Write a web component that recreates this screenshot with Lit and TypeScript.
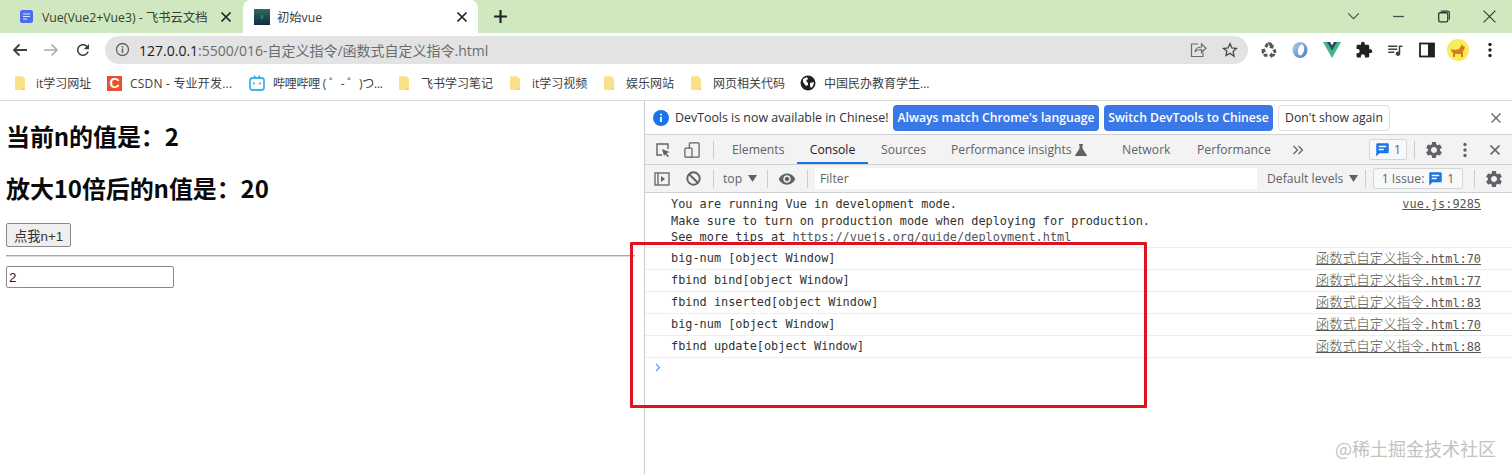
import { LitElement, html, css } from "lit";
import { customElement } from "lit/decorators.js";

const X = (c: string, w = 1.6) => html`<svg class="i12" viewBox="0 0 12 12"><path d="M1.5 1.5l9 9M10.5 1.5l-9 9" stroke=${c} stroke-width=${w} fill="none"/></svg>`;
const folder = html`<svg class="fold" viewBox="0 0 12 16"><path d="M1 0h7l3 3v11l-1 1H1l-1-1V1z" fill="#fbe08a"/><path d="M8 14h3" stroke="#e2c25c"/></svg>`;
const GEAR = "M19.14 12.94c.04-.3.06-.61.06-.94 0-.32-.02-.64-.07-.94l2.03-1.58c.18-.14.23-.41.12-.61l-1.92-3.32c-.12-.22-.37-.29-.59-.22l-2.39.96c-.5-.38-1.03-.7-1.62-.94l-.36-2.54c-.04-.24-.24-.41-.48-.41h-3.84c-.24 0-.43.17-.47.41l-.36 2.54c-.59.24-1.13.57-1.62.94l-2.39-.96c-.22-.08-.47 0-.59.22L2.74 8.87c-.12.21-.08.47.12.61l2.03 1.58c-.05.3-.09.63-.09.94s.02.64.07.94l-2.03 1.58c-.18.14-.23.41-.12.61l1.92 3.32c.12.22.37.29.59.22l2.39-.96c.5.38 1.03.7 1.62.94l.36 2.54c.05.24.24.41.48.41h3.84c.24 0 .44-.17.47-.41l.36-2.54c.59-.24 1.13-.56 1.62-.94l2.39.96c.22.08.47 0 .59-.22l1.92-3.32c.12-.22.07-.47-.12-.61l-2.01-1.58zM12 15.6c-1.98 0-3.6-1.62-3.6-3.6s1.62-3.6 3.6-3.6 3.6 1.62 3.6 3.6-1.62 3.6-3.6 3.6z";
const gear = html`<svg class="i20" viewBox="0 0 24 24"><path d=${GEAR} fill="#5f6368"/></svg>`;
const chat = html`<svg class="i14" viewBox="0 0 24 24"><path d="M20 2H4c-1.1 0-2 .9-2 2v19l5-5h13c1.1 0 2-.9 2-2V4c0-1.1-.9-2-2-2z" fill="#1a73e8"/><path d="M6 7h12M6 12h8" stroke="#fff" stroke-width="2.4"/></svg>`;
const dots = (c: string) => html`<svg class="i4" viewBox="0 0 4 16"><circle cx="2" cy="2.5" r="1.7" fill=${c}/><circle cx="2" cy="8" r="1.7" fill=${c}/><circle cx="2" cy="13.5" r="1.7" fill=${c}/></svg>`;
const tri = html`<svg class="tri" viewBox="0 0 9 7"><path d="M0 0h9L4.5 7z" fill="#5f6368"/></svg>`;

const logs = [
  ["big-num [object Window]", "70"],
  ["fbind bind[object Window]", "77"],
  ["fbind inserted[object Window]", "83"],
  ["big-num [object Window]", "70"],
  ["fbind update[object Window]", "88"],
];
const marks = [
  [folder, "it学习网址"],
  [html`<div class="csdn">C</div>`, "CSDN - 专业开发..."],
  [html`<svg class="i16" viewBox="0 0 16 16"><path d="M5 0.5l2 2.5M11 0.5l-2 2.5" stroke="#3db4e6" stroke-width="1.4"/><rect x="1" y="3" width="14" height="12" rx="2.5" fill="none" stroke="#3db4e6" stroke-width="1.8"/><path d="M5 7.5v2M11 7.5v2" stroke="#3db4e6" stroke-width="1.8"/></svg>`, "哔哩哔哩 ( ゜- ゜)つ..."],
  [folder, "飞书学习笔记"],
  [folder, "it学习视频"],
  [folder, "娱乐网站"],
  [folder, "网页相关代码"],
  [html`<svg class="i16" viewBox="0 0 16 16"><circle cx="8" cy="8" r="7.5" fill="#202124"/><path d="M3 4l4-2 1 2-2 2 2 2v2l-2 1-3-4zM10 8l4-1-1 4-2 2-1-2z" fill="#fff"/></svg>`, "中国民办教育学生..."],
];

@customElement("app-root")
export class AppRoot extends LitElement {
  static styles = css`
    :host { display: block; position: relative; width: 1512px; height: 474px; overflow: hidden; background: #fff; font-family: "Open Sans", "Noto Sans CJK SC", sans-serif; color: #3c4043; }
    svg { display: block; flex: none; }
    .i12 { width: 12px; height: 12px; } .i14 { width: 15px; height: 15px; } .i16 { width: 16px; height: 16px; } .i18 { width: 18px; height: 18px; } .i20 { width: 20px; height: 20px; }
    .i4 { width: 4px; height: 16px; } .tri { width: 9px; height: 7px; }
    .tabs { height: 33px; background: #cfe8bf; display: grid; grid-template-columns: 243px 235px 44px 1fr; align-items: center; font-size: 12.3px; }
    .tab { height: 33px; display: flex; align-items: center; box-sizing: border-box; }
    .t1 { padding-left: 20px; color: #35412f; }
    .t1 .fav { width: 13px; height: 13px; margin-right: 9px; }
    .t1 span { width: 178px; white-space: nowrap; }
    .t2 { background: #fff; border-radius: 8px 8px 0 0; padding-left: 11px; color: #3c4043; }
    .t2 .fav { width: 16px; height: 16px; margin-right: 7px; }
    .t2 span { width: 179px; }
    .plus { justify-self: center; }
    .winbtns { display: grid; grid-template-columns: 45px 44px 46px 46px; justify-content: end; justify-items: center; }
    .toolbar { height: 33px; display: flex; align-items: center; background: #fff; padding-left: 10.5px; }
    .nav { width: 31.5px; display: flex; }
    .nav svg { width: 18px; height: 18px; }
    .omni { width: 1143px; height: 28px; border-radius: 14px; background: #e3e3e3; display: flex; align-items: center; padding: 0 10px; box-sizing: border-box; font-size: 14px; color: #6a6d70; }
    .omni b { font-weight: 400; color: #202124; }
    .omni .url { margin-left: 9px; flex: 1; white-space: nowrap; }
    .omni .share { margin-right: 15px; }
    .exts { display: grid; grid-template-columns: repeat(8, 31.6px); margin-left: 5px; justify-items: center; align-items: center; }
    .avatar { width: 22px; height: 22px; }
    .marks { height: 35px; box-sizing: border-box; border-bottom: 1px solid #d8d8d8; padding-left: 15px; display: grid; grid-template-columns: 92px 142px 150px 111px 94px 87px 109px 1fr; align-items: center; font-size: 12px; color: #3c4043; }
    .mark { display: flex; align-items: center; white-space: nowrap; }
    .mark .slot { width: 22px; flex: none; }
    .mark:nth-child(1) .slot { width: 21px; }
    .mark:nth-child(2) .slot { width: 23px; }
    .mark:nth-child(2) span { letter-spacing: 0.2px; }
    .mark:nth-child(3) .slot, .mark:nth-child(8) .slot { width: 24px; }
    .mark:nth-child(3) span { letter-spacing: -0.25px; }
    .csdn { width: 15px; height: 15px; background: #e8502f; color: #fff; font: 700 14px/15px "Liberation Sans", sans-serif; text-align: center; }
    .fold { width: 11px; height: 15px; }
    .split { display: flex; height: 373px; }
    .page { flex: none; box-sizing: border-box; border-right: 1px solid #ccc; padding-left: 6px; padding-top: 19px; color: #000; width: 645px; font-family: "Liberation Sans", "Noto Sans CJK SC", sans-serif; }
    h3 { margin: 0 0 19px; font: 700 24px/32px "Noto Sans CJK SC", sans-serif; color: #0a0a0a; letter-spacing: -0.1px; }
    h3 + h3 { margin-top: 20px; }
    button.n { display: block; margin: 0 0 8px; width: 65px; height: 24px; padding: 0; box-sizing: border-box; background: #efefef; border: 1px solid #8a8a8a; border-radius: 2px; font-size: 13.3px; font-family: "Liberation Sans", "Noto Sans CJK SC", sans-serif; color: #333; }
    hr { margin: 0 9px 0 0; height: 0; border: 0; border-top: 1px solid #a8a8a8; border-bottom: 1px solid #dcdcdc; }
    input { display: block; margin-top: 9px; width: 168px; height: 22px; box-sizing: border-box; border: 1px solid #8a8a8a; border-radius: 2px; padding: 1px 2px; font: 13.3px "Liberation Sans", sans-serif; color: #222; }
    .dev { flex: 1; min-width: 0; display: flex; flex-direction: column; font-size: 12.2px; color: #5f6368; }
    .info { height: 34px; box-sizing: border-box; border-bottom: 1px solid #cfd1d3; display: flex; align-items: center; padding-left: 8px; background: #fff; color: #303134; font-size: 12.4px; }
    .info .txt { margin-left: 6px; width: 218px; white-space: nowrap; }
    .bbtn { height: 26px; border-radius: 4px; background: #3b78e7; color: #fff; display: flex; align-items: center; justify-content: center; font-weight: 600; font-size: 12.2px; margin-right: 5px; white-space: nowrap; }
    .b1 { width: 206px; } .b2 { width: 169px; }
    .b3 { width: 112px; box-sizing: border-box; background: #fff; color: #303134; border: 1px solid #e0e0e0; font-weight: 400; margin-right: 100px; }
    .devtabs { height: 30px; box-sizing: border-box; background: #f3f3f3; border-bottom: 1px solid #cfd1d3; display: flex; align-items: center; padding-left: 10px; }
    .sep { width: 1px; height: 18px; background: #ccc; flex: none; }
    .dev2 { margin-left: 13px; } .s1 { margin-left: 13px; }
    .dt { height: 29px; display: flex; align-items: center; box-sizing: border-box; white-space: nowrap; flex: none; }
    .d1 { margin-left: 18px; width: 65px; }
    .dt.on { color: #202124; border-bottom: 2px solid #1a73e8; justify-content: center; padding-top: 2px; width: 71px; }
    .d2 { margin-left: 13px; width: 70px; } .d3 { width: 124px; }
    .d4 { margin-left: 35px; width: 75px; } .d5 { width: 95px; }
    .badge { height: 21px; border: 1px solid #d4d6d8; border-radius: 2px; display: flex; align-items: center; justify-content: center; gap: 4px; box-sizing: border-box; background: #f7f8f9; flex: none; }
    .b-a { margin-left: 65px; width: 38px; }
    .s2 { margin-left: 7px; }
    .g1 { margin-left: 9px; } .d3dots { margin-left: 19px; } .x1 { margin-left: 22px; }
    .filter { height: 28px; box-sizing: border-box; background: #f3f3f3; border-bottom: 1px solid #cfd1d3; display: flex; align-items: center; padding-left: 9px; }
    .ban { margin-left: 16px; } .s3 { margin-left: 12px; }
    .top { margin-left: 9px; width: 20px; } .topt { margin-left: 5px; }
    .s4 { margin-left: 10px; } .eye { margin-left: 10px; } .s5 { margin-left: 11px; }
    .fbox { width: 442px; height: 21px; background: #fff; box-sizing: border-box; padding-left: 5px; line-height: 21px; margin: 0 10px 0 7px; flex: none; }
    .lv { width: 77px; white-space: nowrap; flex: none; } .lvt { margin-left: 5px; }
    .s6 { margin-left: 7px; }
    .b-b { margin-left: 7px; width: 90px; }
    .s7 { margin-left: 11px; } .g2 { margin-left: 9px; }
    .log { font: 11.88px/16.5px "DejaVu Sans Mono", "Noto Sans CJK SC", monospace; color: #333; }
    .first { height: 55px; box-sizing: border-box; padding: 3px 31px 0 26px; border-bottom: 1px solid #eee; display: flex; justify-content: space-between; white-space: pre; }
    .first a, .row a { color: #555; text-decoration: underline; }
    .first .u { color: #555; text-decoration: underline; }
    .row { height: 22px; box-sizing: border-box; padding: 0 31px 0 26px; border-bottom: 1px solid #eee; display: flex; justify-content: space-between; align-items: center; white-space: pre; }
    .cjk { font-size: 13.5px; font-family: "Noto Sans CJK SC", sans-serif; font-weight: 300; }
    .prompt { padding: 5px 0 0 10px; }
    .red { position: absolute; left: 630px; top: 242px; width: 517px; height: 166px; box-sizing: border-box; border: 3px solid #e0121e; pointer-events: none; border-radius: 1px; }
    .mark-w { position: absolute; right: 16px; top: 435px; font: 400 18px/26px "Noto Sans CJK SC", sans-serif; color: #c2c2c2; white-space: nowrap; }
  `;

  render() {
    return html`
      <div class="tabs">
        <div class="tab t1">
          <svg class="fav" viewBox="0 0 13 13"><rect width="13" height="13" rx="2.5" fill="#4a6cf0"/><path d="M3 4h7M3 6.5h7M3 9h4" stroke="#dfe6ff" stroke-width="1.1"/></svg>
          <span>Vue(Vue2+Vue3) - 飞书云文档</span>${X("#222", 1.7)}
        </div>
        <div class="tab t2">
          <svg class="fav" viewBox="0 0 16 16"><defs><linearGradient id="g" x1="0" y1="0" x2="0" y2="1"><stop offset="0" stop-color="#2c6a60"/><stop offset="1" stop-color="#142c44"/></linearGradient></defs><rect width="16" height="16" fill="url(#g)"/><rect x="7.5" y="6" width="1" height="4" fill="#5aa88a"/></svg>
          <span>初始vue</span>${X("#222", 1.7)}
        </div>
        <svg class="plus i14" viewBox="0 0 14 14"><path d="M7 1v12M1 7h12" stroke="#222" stroke-width="2"/></svg>
        <div class="winbtns">
          <svg class="i14" viewBox="0 0 14 14"><path d="M2 4l5 5 5-5" stroke="#4a4a4a" fill="none"/></svg>
          <svg class="i14" viewBox="0 0 14 14"><path d="M2 7h10" stroke="#4a4a4a" stroke-width="1.2"/></svg>
          <svg class="i14" viewBox="0 0 14 14"><rect x="2.5" y="3.5" width="8.5" height="8.5" rx="1.5" fill="none" stroke="#333" stroke-width="1.2"/><path d="M4.5 2h6a2 2 0 0 1 2 2v6" fill="none" stroke="#333"/></svg>
          <svg class="i14" viewBox="0 0 14 14"><path d="M1.5 1.5l11 11M12.5 1.5l-11 11" stroke="#333" stroke-width="1"/></svg>
        </div>
      </div>
      <div class="toolbar">
        <div class="nav"><svg viewBox="0 0 18 18"><path d="M16 9H3M8.5 3.5L3 9l5.5 5.5" fill="none" stroke="#3c4043" stroke-width="1.8"/></svg></div>
        <div class="nav"><svg viewBox="0 0 18 18"><path d="M2 9h13M9.5 3.5L15 9l-5.5 5.5" fill="none" stroke="#a9abad" stroke-width="1.6"/></svg></div>
        <div class="nav"><svg viewBox="0 0 24 24"><path d="M17.65 6.35C16.2 4.9 14.21 4 12 4c-4.42 0-7.99 3.58-7.99 8s3.57 8 7.99 8c3.73 0 6.84-2.55 7.73-6h-2.08c-.82 2.33-3.04 4-5.65 4-3.31 0-6-2.69-6-6s2.69-6 6-6c1.66 0 3.14.69 4.22 1.78L13 11h7V4l-2.35 2.35z" fill="#3c4043"/></svg></div>
        <div class="omni">
          <svg class="i14" viewBox="0 0 15 15"><circle cx="7.5" cy="7.5" r="6" fill="none" stroke="#5f6368" stroke-width="1.3"/><path d="M7.5 6.5v4.5M7.5 4v1.5" stroke="#5f6368" stroke-width="1.5"/></svg>
          <div class="url"><b>127.0.0.1</b>:5500/016-自定义指令/函数式自定义指令.html</div>
          <svg class="share i18" viewBox="0 0 18 18"><path d="M9 3H2.5v12.5h11.5v-4" fill="none" stroke="#6a6d70" stroke-width="1.2"/><path d="M6 11c.5-3.5 3-5 6.5-5V3l4.5 4.3-4.5 4V8.5C9.5 8.5 7.5 9 6 11z" fill="none" stroke="#6a6d70" stroke-width="1.2"/></svg>
          <svg class="i16" viewBox="0 0 24 24"><path d="M12 2.5l2.9 6.4 7 .8-5.2 4.7 1.4 6.9L12 17l-6.1 3.3 1.4-6.9L2.1 9.7l7-.8z" fill="none" stroke="#4a4d50" stroke-width="2"/></svg>
        </div>
        <div class="exts">
          <svg class="i18" viewBox="0 0 24 24"><path d="M5.77 7.15 7.2 4.78l1.03-1.71c.39-.65 1.33-.65 1.72 0l1.48 2.46-1.23 2.06-1 1.62-3.43-2.06zm15.95 5.82-1.6-2.66-3.46 2L18.87 16H20c.76 0 1.45-.43 1.79-1.11.14-.28.21-.58.21-.89 0-.36-.1-.71-.28-1.03zM16 21h1.5c.76 0 1.45-.43 1.79-1.11L20.74 17H16v-2l-4 4 4 4v-2zm-6-4H5.7l-.84 1.41c-.3.5-.32 1.12-.06 1.65.28.57.87.94 1.52.94H10v-4zm-3.88-2.65 1.73 1.04L6.48 9.9 1 11.27l1.7 1.02-.41.69c-.35.59-.38 1.31-.07 1.92l1.63 3.26 2.27-3.81zm10.9-9.21-1.3-2.17C15.11 2.02 14.16 1.5 13.14 1.5h-3.35l3.87 6.44-1.72 1.03 5.48 1.37 1.37-5.48-1.77 1.28z" fill="#55585b"/></svg>
          <svg class="i18" viewBox="0 0 18 18"><defs><linearGradient id="o" x1="0" y1="0" x2="1" y2="1"><stop offset="0" stop-color="#b9cfe8"/><stop offset="1" stop-color="#3f78c4"/></linearGradient></defs><ellipse cx="9" cy="9" rx="7.5" ry="8" fill="url(#o)"/><ellipse cx="10" cy="9" rx="3" ry="5.5" fill="#fff" transform="rotate(12 10 9)"/></svg>
          <svg class="i18" viewBox="0 0 18 16"><path d="M0 0h7l2 3.5L11 0h7L9 16z" fill="#41b883"/><path d="M4 0h3l2 3.5L11 0h3L9 8.5z" fill="#2f4a5c"/></svg>
          <svg class="i18" viewBox="0 0 24 24"><path d="M20.5 11H19V7c0-1.1-.9-2-2-2h-4V3.5C13 2.12 11.88 1 10.5 1S8 2.12 8 3.5V5H4c-1.1 0-1.99.9-1.99 2v3.8H3.5c1.49 0 2.7 1.21 2.7 2.7s-1.21 2.7-2.7 2.7H2V20c0 1.1.9 2 2 2h3.8v-1.5c0-1.49 1.21-2.7 2.7-2.7 1.49 0 2.7 1.21 2.7 2.7V22H17c1.1 0 2-.9 2-2v-4h1.5c1.38 0 2.5-1.12 2.5-2.5S21.88 11 20.5 11z" fill="#202124"/></svg>
          <svg class="i18" viewBox="0 0 24 24"><path d="M15 6H3v2h12V6zm0 4H3v2h12v-2zM3 16h8v-2H3v2zM17 6v8.18c-.31-.11-.65-.18-1-.18-1.66 0-3 1.34-3 3s1.34 3 3 3 3-1.34 3-3V8h3V6h-5z" fill="#3c4043"/></svg>
          <svg class="i16" viewBox="0 0 16 16"><rect x="1" y="1.5" width="14" height="13" fill="none" stroke="#202124" stroke-width="1.8"/><rect x="9" y="1.5" width="6" height="13" fill="#202124"/></svg>
          <svg class="avatar" viewBox="0 0 22 22"><circle cx="11" cy="11" r="11" fill="#f7ec5a"/><path d="M4 10c2 1 6 1 8 0l2-3 1-2 1 2 2 1-1 3-1 1v6h-2v-3H8v3H6v-4c-1-1-2-2-2-4z" fill="#dc7a24"/></svg>
          ${dots("#202124")}
        </div>
      </div>
      <div class="marks">
        ${marks.map(([ic, t]) => html`<div class="mark"><div class="slot">${ic}</div><span>${t}</span></div>`)}
      </div>
      <div class="split">
        <div class="page">
          <h3>当前n的值是：2</h3>
          <h3>放大10倍后的n值是：20</h3>
          <button class="n">点我n+1</button>
          <hr />
          <input value="2" />
        </div>
        <div class="dev">
          <div class="info">
            <svg class="i16" viewBox="0 0 16 16"><circle cx="8" cy="8" r="8" fill="#1a73e8"/><path d="M8 7v5M8 3.8v1.8" stroke="#fff" stroke-width="1.8"/></svg>
            <div class="txt">DevTools is now available in Chinese!</div>
            <div class="bbtn b1">Always match Chrome's language</div>
            <div class="bbtn b2">Switch DevTools to Chinese</div>
            <div class="bbtn b3">Don't show again</div>
            ${X("#5f6368", 1.3)}
          </div>
          <div class="devtabs">
            <svg class="i16" viewBox="0 0 16 16"><path d="M7 13H2V2h11v5" fill="none" stroke="#5f6368" stroke-width="1.4"/><path d="M7 7l7.5 3-3 1.2 2.5 3-1.2 1-2.5-3L9 14z" fill="#5f6368"/></svg>
            <svg class="i16 dev2" viewBox="0 0 18 18"><rect x="6" y="1" width="11" height="16" rx="1" fill="none" stroke="#5f6368" stroke-width="1.4"/><rect x="1" y="7" width="8" height="10" rx="1" fill="#f3f3f3" stroke="#5f6368" stroke-width="1.4"/></svg>
            <div class="sep s1"></div>
            <div class="dt d1">Elements</div>
            <div class="dt on">Console</div>
            <div class="dt d2">Sources</div>
            <div class="dt d3">Performance insights</div>
            <svg class="i12 flask" viewBox="0 0 12 12"><path d="M4 0h4v1H7.5v3.5L12 11.5V12H0v-.5l4.5-7V1H4z" fill="#5f6368"/></svg>
            <div class="dt d4">Network</div>
            <div class="dt d5">Performance</div>
            <svg class="i12 more" viewBox="0 0 12 12"><path d="M1.5 2l4 4-4 4M6.500 2l4 4-4 4" fill="none" stroke="#5f6368" stroke-width="1.2"/></svg>
            <div class="badge b-a">${chat}<span>1</span></div>
            <div class="sep s2"></div>
            <div class="g1">${gear}</div>
            <div class="d3dots">${dots("#5f6368")}</div>
            <div class="x1">${X("#5f6368", 1.7)}</div>
          </div>
          <div class="filter">
            <svg class="i16" viewBox="0 0 16 16"><rect x="1" y="2" width="14" height="12" fill="none" stroke="#5f6368" stroke-width="1.3"/><path d="M4 2v12" stroke="#5f6368" stroke-width="1.3"/><path d="M7 5l4 3-4 3z" fill="#5f6368"/></svg>
            <svg class="i14 ban" viewBox="0 0 14 14"><circle cx="7" cy="7" r="5.8" fill="none" stroke="#5f6368" stroke-width="1.8"/><path d="M3 3l8 8" stroke="#5f6368" stroke-width="1.8"/></svg>
            <div class="sep s3"></div>
            <span class="top">top</span><span class="topt">${tri}</span>
            <div class="sep s4"></div>
            <svg class="i18 eye" viewBox="0 0 24 24"><path d="M12 4.5C7 4.5 2.73 7.61 1 12c1.73 4.39 6 7.5 11 7.5s9.27-3.11 11-7.5c-1.73-4.39-6-7.5-11-7.5zM12 17c-2.76 0-5-2.24-5-5s2.24-5 5-5 5 2.24 5 5-2.24 5-5 5zm0-8c-1.66 0-3 1.34-3 3s1.34 3 3 3 3-1.34 3-3-1.34-3-3-3z" fill="#5f6368"/></svg>
            <div class="sep s5"></div>
            <div class="fbox">Filter</div>
            <span class="lv">Default levels</span><span class="lvt">${tri}</span>
            <div class="sep s6"></div>
            <div class="badge b-b"><span>1 Issue:</span>${chat}<span>1</span></div>
            <div class="sep s7"></div>
            <div class="g2">${gear}</div>
          </div>
          <div class="log">
            <div class="first"><div><div>You are running Vue in development mode.</div><div>Make sure to turn on production mode when deploying for production.</div><div>See more tips at <span class="u">https://vuejs.org/guide/deployment.html</span></div></div><a>vue.js:9285</a></div>
            ${logs.map(([m, n]) => html`<div class="row"><span>${m}</span><a><span class="cjk">函数式自定义指令</span>.html:${n}</a></div>`)}
            <div class="prompt"><svg width="6" height="9" viewBox="0 0 6 9"><path d="M1 1l3.5 3.5L1 8" fill="none" stroke="#6f9ae8" stroke-width="1.3"/></svg></div>
          </div>
        </div>
      </div>
      <div class="red"></div>
      <div class="mark-w">@稀土掘金技术社区</div>
    `;
  }
}
